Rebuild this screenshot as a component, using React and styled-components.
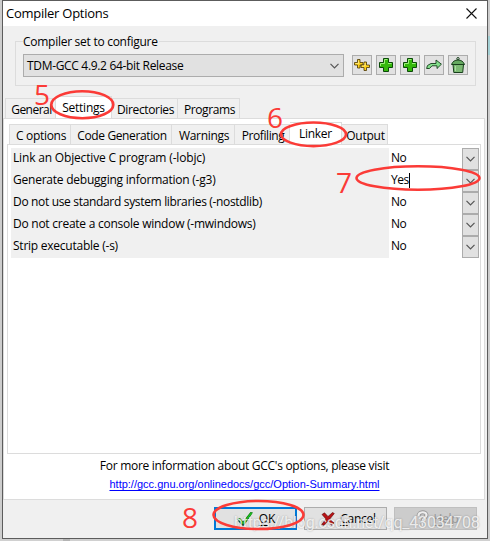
import styled, { createGlobalStyle, css } from "styled-components";

const setButtons = ["find", "add", "add", "rename", "remove"];

const tabs = [
  { label: "General", width: 51, tracking: -0.5 },
  { label: "Settings", width: 56, tracking: -0.25, active: true },
  { label: "Directories", width: 66, tracking: -0.35 },
  { label: "Programs", width: 62, tracking: -0.4 },
];

const subTabs = [
  { label: "C options", width: 62, tracking: -0.3 },
  { label: "Code Generation", width: 101, tracking: -0.38 },
  { label: "Warnings", width: 63, tracking: -0.3 },
  { label: "Profiling", width: 55, tracking: -0.4 },
  { label: "Linker", width: 52, tracking: -0.3, active: true },
  { label: "Output", width: 46, tracking: -0.25 },
];

const options = [
  { label: "Link an Objective C program (-lobjc)", value: "No", tracking: -0.17 },
  { label: "Generate debugging information (-g3)", value: "Yes", tracking: -0.23, editing: true },
  { label: "Do not use standard system libraries (-nostdlib)", value: "No", tracking: -0.33 },
  { label: "Do not create a console window (-mwindows)", value: "No", tracking: -0.25 },
  { label: "Strip executable (-s)", value: "No", tracking: -0.24 },
];

export default function App() {
  return (
    <Desktop>
      <GlobalStyle />
      <Window>
        <TitleBar>
          <Title>Compiler Options</Title>
          <CloseIcon />
        </TitleBar>
        <SetGroup>
          <Legend>
            <Text $tracking={-0.27}>Compiler set to configure</Text>
          </Legend>
          <Select>
            <Text $tracking={-0.32}>TDM-GCC 4.9.2 64-bit Release</Text>
            <Chevron />
          </Select>
          <Tools>
            {setButtons.map((name, i) => (
              <ToolButton key={i}>
                <ToolIcon name={name} />
              </ToolButton>
            ))}
          </Tools>
        </SetGroup>
        <TabBar>
          {tabs.map((tab) => (
            <Tab key={tab.label} $width={tab.width} $active={tab.active}>
              <Text $tracking={tab.tracking}>{tab.label}</Text>
            </Tab>
          ))}
        </TabBar>
        <Panel>
          <SubTabBar>
            {subTabs.map((tab) => (
              <Tab key={tab.label} $width={tab.width} $active={tab.active}>
                <Text $tracking={tab.tracking}>{tab.label}</Text>
              </Tab>
            ))}
          </SubTabBar>
          <OptionList>
            {options.map((option) => (
              <Option key={option.label}>
                <OptionName>
                  <Text $tracking={option.tracking}>{option.label}</Text>
                </OptionName>
                <OptionValue>
                  <Text $tracking={-0.5}>{option.value}</Text>
                  {option.editing && <Caret />}
                </OptionValue>
                <DropButton>
                  <Chevron />
                </DropButton>
              </Option>
            ))}
          </OptionList>
          <Info>
            <Text $tracking={-0.29}>
              For more information about GCC's options, please visit
            </Text>
            <DocLink>http://gcc.gnu.org/onlinedocs/gcc/Option-Summary.html</DocLink>
          </Info>
        </Panel>
        <Footer>
          <Button $primary>
            <CheckIcon />
            <Text $tracking={-0.2}>
              <u>O</u>K
            </Text>
          </Button>
          <Button $indent={6}>
            <CrossIcon />
            <Text $tracking={-0.3}>
              <u>C</u>ancel
            </Text>
          </Button>
          <Button $indent={3} $disabled>
            <HelpIcon />
            <Text $tracking={-0.3}>
              <u>H</u>elp
            </Text>
          </Button>
        </Footer>
      </Window>
      <Watermark>https://blog.csdn.net/qq_43034708</Watermark>
      <Annotations />
    </Desktop>
  );
}

function CloseIcon() {
  return (
    <svg width="11" height="11" viewBox="0 0 11 11">
      <path d="M.5 .5 10.5 10.5M10.5 .5 .5 10.5" stroke="#111" strokeWidth="1.1" />
    </svg>
  );
}

function Chevron() {
  return (
    <svg width="9" height="6" viewBox="0 0 9 6">
      <path d="M.5 .8 4.5 4.8 8.5 .8" fill="none" stroke="#555" strokeWidth="1.2" />
    </svg>
  );
}

function ToolIcon({ name }) {
  return (
    <svg width="16" height="16" viewBox="0 0 16 16">
      {name === "find" && (
        <>
          <g fill="#ffd21f" stroke="#4a3500" strokeWidth=".8">
            <path d="M3.500 2.500h2.500v3h3v2.500h-3v3H3.500V8h-3V5.500h3z" />
            <path d="M10 5h2.500v3h3v2.500h-3v3H10v-3H7V8h3z" />
          </g>
          <path d="M4.500 3.500v3h-3M11 6v3H8" fill="none" stroke="#fff08a" strokeWidth=".8" />
        </>
      )}
      {name === "add" && (
        <>
          <path
            d="M5.500 1.500h5v4h4v5h-4v4h-5v-4h-4v-5h4z"
            fill="#35b80c"
            stroke="#0a4a08"
          />
          <path d="M6.500 6.500V2.500h3M2.500 9V6.500h4M10 6.500h3.500" fill="none" stroke="#9cf07a" />
        </>
      )}
      {name === "rename" && (
        <path
          d="M.6 11.500 1.500 8.500 5 6.500h5V3l5.400 4.200L11 11.500V8.800H6L3.500 11.500z"
          fill="#84e08c"
          stroke="#143c1a"
          strokeWidth=".9"
        />
      )}
      {name === "remove" && (
        <g stroke="#173f1b">
          <circle cx="8" cy="1.700" r="1.200" fill="none" />
          <path d="M3 7.500h10.500l-.8 8H3.800z" fill="#7cba73" />
          <path d="M1.500 7.500C2.500 4.500 5 3 8 3s5.500 1.500 6.500 4.500z" fill="#65a960" />
          <path d="M5.500 9v5" stroke="#a9dda2" />
        </g>
      )}
    </svg>
  );
}

function CheckIcon() {
  return (
    <svg width="18" height="16" viewBox="0 0 18 16">
      <path d="M1 8.500 4 7l3 3.500L14.500 1 17 1.500 8 14.500H6z" fill="#0b7d12" />
      <path d="M3 8l4 4.500L15.500 2" fill="none" stroke="#22c322" strokeWidth="1.300" />
      <path d="M2 9l4.500 5H8" fill="none" stroke="#123a45" />
    </svg>
  );
}

function CrossIcon() {
  return (
    <svg width="14" height="14" viewBox="0 0 14 14">
      <path
        d="M1 2.500 3.500.8 7 4.500 11.500.5l1.800 1L9 6.800l4 4.200-2.300 2.300L7 9l-4 4.300-2.300-.8L5 7z"
        fill="#b81215"
        stroke="#5c0808"
        strokeWidth=".6"
      />
    </svg>
  );
}

function HelpIcon() {
  return (
    <svg width="13" height="17" viewBox="0 0 13 17" fill="none">
      <path d="M2.500 6C2.500 1.200 10.500 1.200 10.500 5c0 3-4 2.800-4 6M6.500 13v3" stroke="#999" strokeWidth="4" />
      <path d="M2.500 6C2.500 1.200 10.500 1.200 10.500 5c0 3-4 2.800-4 6M6.500 13v3" stroke="#eee" strokeWidth="2.200" />
    </svg>
  );
}

function Annotations() {
  return (
    <Overlay viewBox="0 0 490 541">
      <g fill="none" stroke="#fb3b37" strokeWidth="2.600">
        <ellipse cx="82.300" cy="104.700" rx="31" ry="13.500" />
        <ellipse cx="313.500" cy="134.300" rx="32.500" ry="11.800" />
        <ellipse cx="418" cy="178" rx="61.500" ry="11.800" />
        <ellipse cx="258.500" cy="515" rx="45" ry="14" />
      </g>
      <g fill="#fb3b37" fontFamily="Open Sans, sans-serif" fontSize="28">
        <text x="34" y="105">5</text>
        <text x="267" y="128">6</text>
        <text x="336" y="193">7</text>
        <text x="182" y="528">8</text>
      </g>
    </Overlay>
  );
}

const GlobalStyle = createGlobalStyle`
  * {
    box-sizing: border-box;
  }

  body {
    margin: 0;
    overflow: hidden;
    color: #000;
    font-family: "Open Sans", "Noto Sans", sans-serif;
    font-size: 12px;
    line-height: 16px;
  }
`;

const Desktop = styled.div`
  position: relative;
  width: 490px;
  height: 541px;
  padding: 0 2px 2px;
  background:
    linear-gradient(#a4d0d4, #a4d0d4) 488px 36px / 2px 19px no-repeat,
    linear-gradient(#b4b4b4, #b4b4b4) 63px 539px / 7px 2px no-repeat,
    linear-gradient(#cdcdcd 0 538px, #d0d0d0 538px);
`;

const Window = styled.div`
  display: flex;
  flex-direction: column;
  width: 486px;
  height: 539px;
  border: 1px solid #5c5c5c;
  background: #f0f0f0;
`;

const Text = styled.span`
  white-space: pre;
  letter-spacing: ${(p) => p.$tracking || 0}px;

  u {
    text-underline-offset: 2px;
  }
`;

const TitleBar = styled.header`
  display: flex;
  flex: none;
  align-items: center;
  justify-content: space-between;
  height: 25px;
  padding: 0 10px 0 3px;
  background: #fff;
`;

const Title = styled.h1`
  margin: -2px 0 0;
  font-size: 13px;
  font-weight: 400;
  letter-spacing: -0.25px;
`;

const SetGroup = styled.section`
  display: flex;
  flex: none;
  height: 45px;
  margin: 15px 11px 0 12px;
  padding: 0 6px 0 7px;
  border: 1px solid #dcdcdc;
`;

const Legend = styled.div`
  align-self: flex-start;
  width: 136px;
  height: 16px;
  margin: -8px -136px 0 0;
  background: #f0f0f0;
`;

const Select = styled.div`
  display: flex;
  align-items: center;
  justify-content: space-between;
  width: 321px;
  height: 23px;
  margin-top: 12px;
  padding: 0 4px 0 3px;
  border: 1px solid #acacac;
  background: #e1e1e1;
`;

const Tools = styled.div`
  display: flex;
  gap: 4px;
  margin: 13px 0 0 8px;
`;

const ToolButton = styled.div`
  display: flex;
  align-items: center;
  justify-content: center;
  width: 20px;
  height: 20px;
  border: 1px solid #acacac;
  background: #e1e1e1;
`;

const TabBar = styled.nav`
  display: flex;
  flex: none;
  align-items: flex-end;
  height: 22px;
  margin: 10px 0 0 2px;
`;

const Tab = styled.div`
  display: flex;
  justify-content: center;
  width: ${(p) => p.$width}px;
  height: 20px;
  padding: 3px 0 0 2px;
  border: 1px solid #dcdcdc;
  border-width: 1px 1px 0 0;
  background: #f0f0f0;

  &:first-child {
    border-left-width: 1px;
  }

  ${(p) =>
    p.$active &&
    css`
      height: 23px;
      margin-bottom: -1px;
      padding-left: 0;
      background: #fff;
    `}
`;

const Panel = styled.main`
  display: flex;
  flex: none;
  flex-direction: column;
  width: 482px;
  height: 382px;
  padding: 3px 3px 0;
  border: 1px solid #dcdcdc;
  background: #fff;
`;

const SubTabBar = styled(TabBar)`
  height: 22px;
  margin: 0 0 0 2px;
`;

const OptionList = styled.div`
  flex: none;
  height: 310px;
  padding: 3px 1px 0 3px;
  border: 1px solid #dcdcdc;
  background: #fff;
`;

const Option = styled.div`
  display: grid;
  grid-template-columns: 378px 1fr 17px;
  height: 22px;
`;

const OptionName = styled.div`
  padding: 2px 0 0 2px;
  background: #f0f0f0;
`;

const OptionValue = styled.div`
  display: flex;
  padding: 2px 0 0 2px;
`;

const Caret = styled.span`
  width: 1px;
  height: 15px;
  margin-top: 1px;
  background: #000;
`;

const DropButton = styled.div`
  display: flex;
  align-items: center;
  justify-content: center;
  border: 1px solid #acacac;
  background: #e1e1e1;
`;

const Info = styled.div`
  display: flex;
  flex-direction: column;
  align-items: center;
  gap: 2px;
  padding: 4px 0 0 1px;
`;

const DocLink = styled.a`
  color: #00f;
  font-family: "Liberation Sans", Arial, sans-serif;
  font-size: 11px;
  text-decoration: underline;
  text-underline-offset: 2px;
`;

const Footer = styled.footer`
  display: flex;
  gap: 7px;
  padding: 7px 0 0 211px;
`;

const Button = styled.div`
  display: flex;
  align-items: center;
  justify-content: center;
  gap: 5px;
  width: 83px;
  height: 23px;
  padding-left: ${(p) => p.$indent || 0}px;
  border: ${(p) => (p.$primary ? "2px solid #0078d7" : "1px solid #acacac")};
  border-color: ${(p) => p.$disabled && "#bfbfbf"};
  background: ${(p) => (p.$disabled ? "#ccc" : "#e1e1e1")};
  color: ${(p) => (p.$disabled ? "#999" : "#000")};
`;

const Overlay = styled.svg`
  position: absolute;
  top: 0;
  left: 0;
  width: 490px;
  height: 541px;
`;

const Watermark = styled.div`
  position: absolute;
  top: 514px;
  left: 234px;
  color: rgba(255, 255, 255, 0.8);
  font-family: Roboto, sans-serif;
  font-size: 16px;
  line-height: 18px;
  letter-spacing: -0.2px;
  white-space: nowrap;
  text-shadow: 0 0 2px rgba(0, 0, 0, 0.3);
`;
